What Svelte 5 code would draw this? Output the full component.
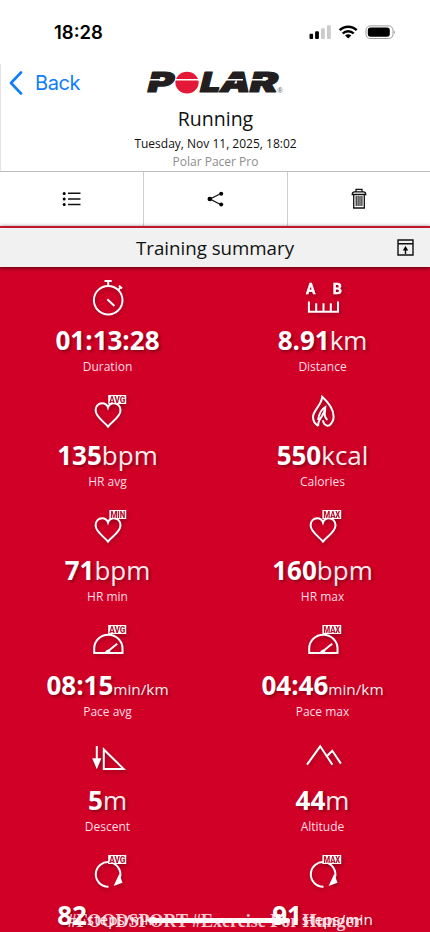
<script lang="ts">
	type Metric = {
		icon: string;
		badge?: 'AVG' | 'MIN' | 'MAX';
		value: string;
		unit?: string;
		small?: boolean;
		label?: string;
	};

	const metrics: Metric[] = [
		{ icon: 'stopwatch', value: '01:13:28', label: 'Duration' },
		{ icon: 'ruler', value: '8.91', unit: 'km', label: 'Distance' },
		{ icon: 'heart', badge: 'AVG', value: '135', unit: 'bpm', label: 'HR avg' },
		{ icon: 'flame', value: '550', unit: 'kcal', label: 'Calories' },
		{ icon: 'heart', badge: 'MIN', value: '71', unit: 'bpm', label: 'HR min' },
		{ icon: 'heart', badge: 'MAX', value: '160', unit: 'bpm', label: 'HR max' },
		{ icon: 'gauge', badge: 'AVG', value: '08:15', unit: 'min/km', small: true, label: 'Pace avg' },
		{ icon: 'gauge', badge: 'MAX', value: '04:46', unit: 'min/km', small: true, label: 'Pace max' },
		{ icon: 'descent', value: '5', unit: 'm', label: 'Descent' },
		{ icon: 'peaks', value: '44', unit: 'm', label: 'Altitude' },
		{ icon: 'cadence', badge: 'AVG', value: '82', unit: 'steps/min', small: true },
		{ icon: 'cadence', badge: 'MAX', value: '91', unit: 'steps/min', small: true },
	];

	const badgeX = { AVG: 24.2, MIN: 25.4, MAX: 23.4 };
</script>

<div class="screen">
	<div class="status">
		<span class="time">18:28</span>
		<svg class="status-icons" width="86" height="16" viewBox="0 0 86 16">
			<rect x="0.5" y="8.7" width="3.6" height="5.3" rx="1" />
			<rect x="6.1" y="6.2" width="3.8" height="7.8" rx="1" />
			<rect x="12" y="3.2" width="3.8" height="10.8" rx="1" fill="#cbcbcb" />
			<rect x="18" y="0.2" width="3.8" height="13.8" rx="1" fill="#cbcbcb" />
			<g fill="none" stroke="#000" stroke-width="2.5">
				<path d="M30.7 5.2a12 12 0 0 1 17 0" />
				<path d="M33.7 8.5a7.7 7.7 0 0 1 11 0" />
			</g>
			<path d="M39.2 13.6l-3.1-3.1a4.4 4.4 0 0 1 6.2 0z" />
			<rect x="57" y="0.9" width="27" height="12.6" rx="4.2" fill="none" stroke="#9b9b9b" />
			<rect x="58.8" y="2.6" width="22" height="9.2" rx="2.8" />
			<path d="M85 5.2v4q1.2-2 0-4z" fill="#777" />
		</svg>
	</div>

	<header>
		<div class="nav">
			<button class="back">
				<svg width="14" height="24" viewBox="0 0 14 24">
					<path d="M12 1.5L2 12l10 10.5" />
				</svg>
				Back
			</button>
			<svg class="logo" width="140" height="28" viewBox="0 0 140 28" role="img" aria-label="Polar">
				<g class="wordmark" transform="translate(-1 24.3) skewX(-14)">
					<text x="0" textLength="26" lengthAdjust="spacingAndGlyphs">P</text>
					<text x="52.5" textLength="20" lengthAdjust="spacingAndGlyphs">L</text>
					<text x="72.5" textLength="30" lengthAdjust="spacingAndGlyphs">A</text>
					<text x="102" textLength="28" lengthAdjust="spacingAndGlyphs">R</text>
				</g>
				<ellipse cx="40" cy="14.6" rx="11.6" ry="10.9" fill="#e31937" />
				<path d="M0 11.8h15M28 11.8h24M74 11.8h22M101 11.8h18" stroke="#fff" stroke-width="1.5" />
				<text class="reg" x="130.5" y="24.8">®</text>
			</svg>
		</div>
		<h1>Running</h1>
		<p class="date">Tuesday, Nov 11, 2025, 18:02</p>
		<p class="device">Polar Pacer Pro</p>
	</header>

	<div class="actions">
		<button aria-label="List">
			<svg width="20" height="16" viewBox="0 0 20 16">
				<g class="line" stroke-width="1.5"><path d="M6 2.3h12.5M6 7.9h12.5M6 13.4h12.5" /></g>
				<circle cx="2.2" cy="2.4" r="1.5" /><circle cx="2.2" cy="8" r="1.5" /><circle cx="2.2" cy="13.5" r="1.5" />
			</svg>
		</button>
		<button aria-label="Share">
			<svg width="18" height="18" viewBox="0 0 18 18">
				<path class="line" stroke-width="1.3" d="M14 3.5L3 9l11 5.8" />
				<circle cx="2.8" cy="9" r="2.3" /><circle cx="14.2" cy="3.7" r="2" /><circle cx="14.2" cy="14.5" r="2" />
			</svg>
		</button>
		<button aria-label="Delete">
			<svg width="16" height="22" viewBox="0 0 16 22">
				<path class="line" stroke-width="1.3" d="M5 3.5V1.3h6v2.2M1.2 6.5q.3-2.7 2.2-2.7h9.2q1.900 0 2.200 2.700zM2.700 7v13h10.600V7" />
				<path class="line" stroke-width="1.1" d="M5.200 8v10M7.100 8v10M9 8v10M10.900 8v10" />
			</svg>
		</button>
	</div>

	<div class="summary-bar">
		<h2>Training summary</h2>
		<svg width="17" height="17" viewBox="0 0 17 17">
			<path class="line" stroke-width="1.4" d="M1 1h15v15H1zM1 4.8h15M8.5 15V9" />
			<path d="M8.5 7l2.7 4.6H5.8z" />
		</svg>
	</div>

	<div class="metrics">
		{#each metrics as m}
			<div class="metric">
				<svg class="icon" width="48" height="48" viewBox="0 0 48 48">
					{#if m.icon === 'stopwatch'}
						<circle cx="24.2" cy="25.2" r="14.3" />
						<path d="M20.5 6h7.2M24.2 6v5M23.3 24.2l7.2 6.8M34.6 14.6l2.100-2.500M35 10.800l3 2.800" />
					{:else if m.icon === 'ruler'}
						<text class="ab" x="7" y="19" textLength="9.4" lengthAdjust="spacingAndGlyphs">A</text>
						<text class="ab" x="33.8" y="19" textLength="9.2" lengthAdjust="spacingAndGlyphs">B</text>
						<path d="M9.9 26.5v10.2h29.1V26.5M17.2 28.2v8M24.5 28.2v8M31.8 28.2v8" />
					{:else if m.icon === 'heart'}
						<path d="M24 36.6C20.5 32 11.6 27.2 11.6 20.3c0-4.3 3-7.1 6.5-7.1 2.8 0 5 1.5 5.9 4.3.9-2.8 3.1-4.3 5.9-4.3 3.5 0 6.6 2.8 6.6 7.1C36.5 27.2 27.5 32 24 36.6z" />
					{:else if m.icon === 'flame'}
						<path d="M19.3 35.9C15.6 33.6 14 30.5 14 27c0-6.8 8.4-11.2 9.2-20.2 6.3 5.7 11.4 12.6 11.4 19.7 0 4-1.8 7.3-5.2 9.4" />
						<path d="M19.3 35.9c-1.6-6.4 6-8.6 7-18.9-5 2.8-6.6 8.5-7.2 13M26.3 18.5c-.9 5.6-1.3 8.5 2 11.5M29.4 35.9c-3.6-.6-5.2-2.5-5.4-5.7" />
					{:else if m.icon === 'gauge'}
						<path d="M10.2 33V28.6C10.2 20.8 16.5 14.8 24.3 14.8S38.5 20.8 38.5 28.6V33z" />
						<path d="M24.5 30.8L33.2 23.8" />
						<path class="solid" d="M21 32.5q.5-2.7 4.3-3l1.4 1.6-2 1.4z" />
					{:else if m.icon === 'descent'}
						<path d="M12.8 11V26M19.8 14.500v19.400h19.800z" />
						<path class="solid" d="M8.2 23.3h9.2l-4.6 11z" />
					{:else if m.icon === 'peaks'}
						<path d="M8 29.700L21.200 11.300 33.400 29.700M28.300 20.800L33.300 15.800 41.900 28.600" />
					{:else if m.icon === 'cadence'}
						<path d="M24.5 36.700A12.300 12.300 0 1 1 36 27.500" />
						<path class="solid" d="M35.300 23.800l3.200 9-8.900 3.200z" />
					{/if}
					{#if m.badge}
						<rect class="badge" x={badgeX[m.badge]} y="5" width={42.2 - badgeX[m.badge]} height="9" />
						<text
							class="badge-text"
							x={badgeX[m.badge] + 1}
							y="12.6"
							textLength={40.2 - badgeX[m.badge]}
							lengthAdjust="spacingAndGlyphs">{m.badge}</text>
					{/if}
				</svg>
				<div class="value">
					<b>{m.value}</b>{#if m.unit}<span class:small={m.small}>{m.unit}</span>{/if}
				</div>
				{#if m.label}
					<div class="label">{m.label}</div>
				{/if}
			</div>
		{/each}
	</div>

	<div class="home-indicator"></div>
	<div class="hashtags">#FOODSPORT #Exercise For Hunger</div>
</div>

<style>
	:global(body) {
		background: #fff;
	}

	.screen {
		position: relative;
		width: 430px;
		height: 932px;
		overflow: hidden;
		display: flex;
		flex-direction: column;
		background: #fff;
		color: #111;
		font-family: 'Open Sans', 'Noto Sans', sans-serif;
	}

	h1,
	h2,
	p {
		margin: 0;
		font-weight: 400;
	}

	button {
		border: 0;
		padding: 0;
		background: none;
		font: inherit;
		color: inherit;
	}

	.status {
		flex: none;
		height: 64px;
		box-sizing: border-box;
		padding: 20px 35px 0 54px;
		display: flex;
		justify-content: space-between;
		align-items: flex-start;
	}

	.time {
		font: 600 18.5px/25px Inter, sans-serif;
		color: #000;
	}

	.status-icons {
		margin: 5px 0 0 0;
	}

	header {
		flex: none;
		height: 107px;
		text-align: center;
		border-left: 1px solid #e4e4e4;
		box-sizing: border-box;
	}

	.nav {
		height: 42px;
		display: grid;
		grid-template-columns: 146px 140px 1fr;
		align-items: start;
	}

	.back {
		display: flex;
		align-items: center;
		gap: 12px;
		height: 37px;
		padding-left: 8px;
		font: 400 20px Inter, sans-serif;
		letter-spacing: -0.4px;
		color: #117df9;
	}

	.back path {
		fill: none;
		stroke: #117df9;
		stroke-width: 2.6;
		stroke-linecap: round;
		stroke-linejoin: round;
	}

	.logo {
		margin-top: 4px;
		overflow: visible;
	}

	.wordmark {
		font: 900 27.5px Inter, sans-serif;
		fill: #231f20;
		stroke: #231f20;
		stroke-width: 1.2;
		stroke-linejoin: round;
	}

	.reg {
		font: 7px 'Liberation Sans', sans-serif;
		fill: #555;
	}

	h1 {
		font-size: 19.5px;
		line-height: 26px;
	}

	.date {
		font-size: 12px;
		line-height: 24px;
	}

	.device {
		font-size: 12px;
		line-height: 12px;
		color: #8d8d8d;
	}

	.actions {
		flex: none;
		height: 55px;
		box-sizing: border-box;
		display: grid;
		grid-template-columns: 143px 144px 143px;
		border-top: 1px solid #bdbdbd;
	}

	.actions button {
		display: flex;
		align-items: center;
		justify-content: center;
	}

	.actions button + button {
		border-left: 1px solid #cfcfcf;
	}

	.line {
		fill: none;
		stroke: #111;
	}

	.summary-bar {
		flex: none;
		height: 41px;
		box-sizing: border-box;
		border-top: 2px solid #c01530;
		padding: 0 16px 0 33px;
		display: flex;
		align-items: center;
		background: #f1f1f1;
		box-shadow: 0 1px 4px rgba(50, 0, 10, 0.8);
		z-index: 1;
	}

	h2 {
		flex: 1;
		text-align: center;
		font-size: 18.7px;
		line-height: 28px;
	}

	.metrics {
		flex: 1;
		min-height: 0;
		display: grid;
		grid-template-columns: 1fr 1fr;
		grid-auto-rows: 115px;
		padding-top: 8px;
		background: #d10027;
		color: #fff;
	}

	.metric {
		display: flex;
		flex-direction: column;
		align-items: center;
	}

	.icon {
		flex: none;
		fill: none;
		stroke: #fff;
		stroke-width: 2;
		filter: drop-shadow(1px 2px 2px rgba(60, 0, 10, 0.4));
	}

	.icon .solid,
	.icon .badge {
		fill: #fff;
		stroke: none;
	}

	.icon .ab {
		font: 700 15.5px Roboto, sans-serif;
		fill: #fff;
		stroke: #fff;
		stroke-width: 0.4;
	}

	.icon .badge-text {
		font: 900 8.5px Roboto, sans-serif;
		fill: #b9152f;
		stroke: none;
	}

	.value {
		height: 34px;
		line-height: 34px;
		font-size: 26px;
		font-weight: 400;
		white-space: nowrap;
		color: #ffecef;
		text-shadow: 2px 2px 3px rgba(60, 0, 10, 0.45);
	}

	.value b {
		font-weight: 700;
		color: #fff;
	}

	.small {
		font-size: 15.3px;
	}

	.label {
		font-size: 12px;
		line-height: 20px;
		color: #ffdce2;
	}

	.home-indicator {
		position: absolute;
		left: 148px;
		bottom: 9px;
		width: 142px;
		height: 5px;
		border-radius: 3px;
		background: #fff;
		z-index: 2;
	}

	.hashtags {
		position: absolute;
		left: 0;
		right: 1px;
		bottom: 0;
		text-align: center;
		font: 700 18px/21px 'Liberation Serif', serif;
		color: rgba(255, 240, 243, 0.85);
		white-space: nowrap;
		z-index: 3;
	}
</style>
